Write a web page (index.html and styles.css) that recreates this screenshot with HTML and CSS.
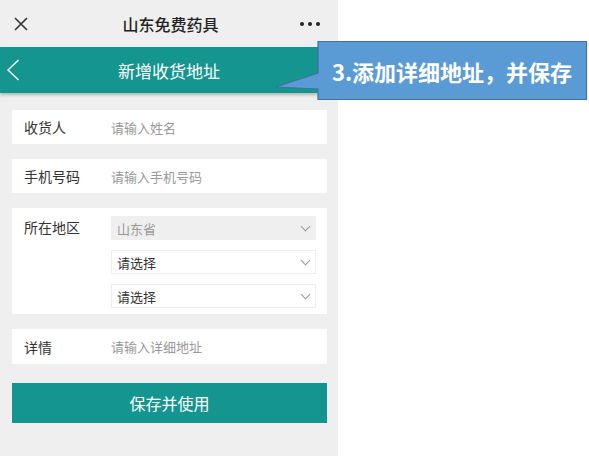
FILE: index.html
```html
<!DOCTYPE html>
<html lang="zh-CN">
<head>
  <meta charset="UTF-8" />
  <meta name="viewport" content="width=device-width, initial-scale=1.0"/>
  <title>新增收货地址</title>
  <link rel="stylesheet" href="styles.css">
</head>
<body>

<div class="phone">
  <!-- WeChat top bar -->
  <div class="topbar">
    <svg class="close" width="16" height="16" viewBox="0 0 16 16">
      <path d="M2 2 L14 14 M14 2 L2 14" stroke="#333" stroke-width="1.6" fill="none"/>
    </svg>
    <div class="topbar-title">山东免费药具</div>
    <div class="dots"><span></span><span></span><span></span></div>
  </div>

  <!-- Page header -->
  <div class="header">
    <svg class="back" width="14" height="22" viewBox="0 0 14 22">
      <path d="M12.5 1 L2 11 L12.5 21" stroke="#fff" stroke-width="1.4" fill="none"/>
    </svg>
    <div class="header-title">新增收货地址</div>
  </div>

  <div class="form">
    <div class="row">
      <div class="label">收货人</div>
      <div class="placeholder">请输入姓名</div>
    </div>

    <div class="row">
      <div class="label">手机号码</div>
      <div class="placeholder">请输入手机号码</div>
    </div>

    <div class="row row-area">
      <div class="label">所在地区</div>
      <div class="selects">
        <div class="select disabled">山东省<span class="arrow"></span></div>
        <div class="select">请选择<span class="arrow"></span></div>
        <div class="select">请选择<span class="arrow"></span></div>
      </div>
    </div>

    <div class="row">
      <div class="label">详情</div>
      <div class="placeholder">请输入详细地址</div>
    </div>

    <button class="save">保存并使用</button>
  </div>
</div>

<!-- Annotation callout -->
<div class="callout">
  <svg class="callout-shape" width="314" height="62" viewBox="0 0 314 62">
    <path d="M43 1.5 H311.5 V59.5 H43 V49 L0.5 47 L43 33 Z" fill="#5b9bd5" stroke="#41719c" stroke-width="1.2"/>
  </svg>
  <div class="callout-text">3.添加详细地址，并保存</div>
</div>

</body>
</html>
```

FILE: styles.css
```css
body {
  margin: 0;
  background: #fff;
  font-family: "Noto Sans CJK SC", "Noto Sans", sans-serif;
  width: 589px;
  height: 456px;
  overflow: hidden;
  position: relative;
}

.phone {
  width: 338px;
  height: 456px;
  background: #efefef;
}

.topbar {
  height: 47px;
  display: flex;
  align-items: center;
  justify-content: space-between;
  padding: 0 18px 0 12px;
}

.close {
  margin-left: 1px;
}

.topbar-title {
  font-size: 16px;
  font-weight: 500;
  color: #222;
  margin-left: 12px;
}

.dots {
  display: flex;
  gap: 4px;
}

.dots span {
  width: 4px;
  height: 4px;
  border-radius: 50%;
  background: #222;
}

.header {
  height: 46px;
  background: #159590;
  box-shadow: 0 2px 3px rgba(0,0,0,0.25);
  display: flex;
  align-items: center;
  position: relative;
}

.back {
  margin-left: 6px;
}

.header-title {
  position: absolute;
  left: 0;
  right: 0;
  text-align: center;
  color: #fff;
  font-size: 17px;
}

.form {
  padding: 17px 11px 0 12px;
  display: flex;
  flex-direction: column;
  gap: 15px;
}

.row {
  background: #fff;
  height: 34px;
  display: flex;
  align-items: center;
  padding-left: 12px;
}

.label {
  width: 87px;
  font-size: 14px;
  color: #333;
}

.placeholder {
  font-size: 13px;
  color: #999;
}

.row-area {
  height: auto;
  align-items: flex-start;
  padding: 8px 11px 6px 12px;
}

.row-area .label {
  margin-top: 1px;
}

.selects {
  flex: 1;
  display: flex;
  flex-direction: column;
  gap: 10px;
}

.select {
  height: 22px;
  border: 1px solid #eee;
  display: flex;
  align-items: center;
  justify-content: space-between;
  padding: 0 6px 0 5px;
  font-size: 13px;
  color: #333;
}

.select.disabled {
  background: #efefef;
  border-color: #efefef;
  color: #999;
}

.arrow {
  width: 6px;
  height: 6px;
  border-right: 1px solid #999;
  border-bottom: 1px solid #999;
  transform: rotate(45deg);
  margin-top: -4px;
}

.row:last-of-type {
  height: 35px;
}

.save {
  margin-top: 4px;
  height: 40px;
  border: none;
  background: #159590;
  color: #fff;
  font-size: 16px;
  font-family: inherit;
}

.callout {
  position: absolute;
  left: 275px;
  top: 40px;
  width: 314px;
  height: 62px;
}

.callout-shape {
  position: absolute;
  left: 0;
  top: 0;
}

.callout-text {
  position: absolute;
  left: 43px;
  right: 3px;
  top: 1px;
  height: 59px;
  display: flex;
  align-items: center;
  justify-content: center;
  color: #fff;
  font-size: 22px;
  font-weight: bold;
}
```
